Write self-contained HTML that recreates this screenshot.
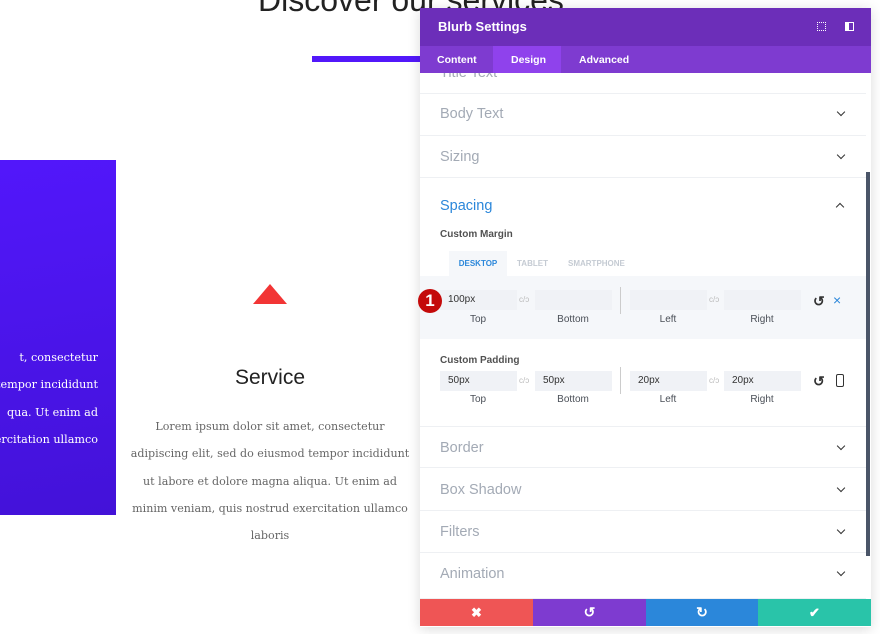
<!DOCTYPE html>
<html><head><style>
*{margin:0;padding:0;box-sizing:border-box}
body{width:880px;height:634px;overflow:hidden;background:#fff;position:relative;font-family:"Liberation Sans",sans-serif}
.abs{position:absolute}
.serif{font-family:"DejaVu Serif","Liberation Serif",serif}
.row{position:absolute;left:420px;width:446px;border-bottom:1px solid #eef0f3;font-size:14.5px;color:#a3aab5}
.row span{position:absolute;left:20px}
.chev{position:absolute;right:22px;width:6px;height:6px;border-right:1.8px solid #333;border-bottom:1.8px solid #333;transform:rotate(45deg)}
.inp{position:absolute;height:20px;background:#f0f2f6;font-size:10px;color:#333;padding-left:8px;line-height:20px}
.lab{position:absolute;font-size:10px;color:#4a4f57;text-align:center;width:76px}
.lnk{position:absolute;font-size:8px;color:#bbb}
</style></head><body>
<div class="abs" style="left:258px;top:-18px;font-size:32px;color:#222">Discover our services</div>
<div class="abs" style="left:312px;top:56px;width:110px;height:6px;background:#5218fa"></div>
<div class="abs" style="left:0;top:160px;width:116px;height:355px;background:linear-gradient(170deg,#5217fb,#4312d8)"></div>
<div class="abs serif" style="left:-150px;top:344px;width:248px;text-align:right;color:#fff;font-size:11.2px;line-height:27.3px;white-space:nowrap">t, consectetur<br>tempor incididunt<br>qua. Ut enim ad<br>ercitation ullamco</div>
<div class="abs" style="left:253px;top:284px;width:0;height:0;border-left:17px solid transparent;border-right:17px solid transparent;border-bottom:20px solid #f23535"></div>
<div class="abs" style="left:170px;top:366px;width:200px;text-align:center;font-size:21px;color:#222">Service</div>
<div class="abs serif" style="left:110px;top:413px;width:320px;text-align:center;color:#666;font-size:11.1px;line-height:27.3px;white-space:nowrap">Lorem ipsum dolor sit amet, consectetur<br>adipiscing elit, sed do eiusmod tempor incididunt<br>ut labore et dolore magna aliqua. Ut enim ad<br>minim veniam, quis nostrud exercitation ullamco<br>laboris</div>

<div class="abs" style="left:420px;top:8px;width:451px;height:619px;background:#fff;box-shadow:0 2px 12px rgba(0,0,0,.15)"></div>
<div class="row" style="top:73px;height:21px;"><span style="top:-8px">Title Text</span></div>
<div class="row" style="top:94px;height:42px"><span style="top:12px">Body Text</span><div class="chev" style="top:15px"></div></div>
<div class="row" style="top:136px;height:42px"><span style="top:13px">Sizing</span><div class="chev" style="top:16px"></div></div>
<div class="abs" style="left:440px;top:198px;font-size:14.5px;color:#2b87da">Spacing</div>
<div class="abs" style="left:837px;top:204px;width:6px;height:6px;border-left:1.8px solid #333;border-top:1.8px solid #333;transform:rotate(45deg)"></div>
<div class="abs" style="left:440px;top:229px;font-size:10px;color:#333;font-weight:bold;opacity:.85">Custom Margin</div>
<div class="abs" style="left:449px;top:251px;width:58px;height:25px;background:#f5f7fa;font-size:8px;font-weight:bold;color:#2b87da;text-align:center;line-height:26px">DESKTOP</div>
<div class="abs" style="left:517px;top:259px;font-size:8px;font-weight:bold;color:#c5cbd3">TABLET</div>
<div class="abs" style="left:568px;top:259px;font-size:8px;font-weight:bold;color:#c5cbd3">SMARTPHONE</div>
<div class="abs" style="left:420px;top:276px;width:446px;height:63px;background:#f5f7fa"></div>
<div class="inp" style="left:440px;top:290px;width:77px">100px</div>
<div class="inp" style="left:535px;top:290px;width:77px"></div>
<div class="inp" style="left:630px;top:290px;width:77px"></div>
<div class="inp" style="left:724px;top:290px;width:77px"></div>
<div class="abs" style="left:620px;top:287px;width:1px;height:27px;background:#ccc"></div>
<div class="lnk" style="left:519px;top:295px">c/ɔ</div><div class="lnk" style="left:709px;top:295px">c/ɔ</div>
<div class="abs" style="left:418px;top:289px;width:24px;height:24px;border-radius:50%;background:#c40a0a;color:#fff;font-size:17px;text-align:center;line-height:24px;font-weight:bold">1</div>
<div class="lab" style="left:440px;top:314px">Top</div><div class="lab" style="left:535px;top:314px">Bottom</div><div class="lab" style="left:630px;top:314px">Left</div><div class="lab" style="left:724px;top:314px">Right</div>
<div class="abs" style="left:813px;top:293px;font-size:14px;font-weight:bold;color:#333">↺</div>
<div class="abs" style="left:833px;top:292px;font-size:14px;color:#2b87da">×</div>
<div class="abs" style="left:440px;top:355px;font-size:10px;color:#333;font-weight:bold;opacity:.85">Custom Padding</div>
<div class="inp" style="left:440px;top:371px;width:77px">50px</div>
<div class="inp" style="left:535px;top:371px;width:77px">50px</div>
<div class="inp" style="left:630px;top:371px;width:77px">20px</div>
<div class="inp" style="left:724px;top:371px;width:77px">20px</div>
<div class="abs" style="left:620px;top:367px;width:1px;height:27px;background:#ccc"></div>
<div class="lnk" style="left:519px;top:376px">c/ɔ</div><div class="lnk" style="left:709px;top:376px">c/ɔ</div>
<div class="lab" style="left:440px;top:394px">Top</div><div class="lab" style="left:535px;top:394px">Bottom</div><div class="lab" style="left:630px;top:394px">Left</div><div class="lab" style="left:724px;top:394px">Right</div>
<div class="abs" style="left:813px;top:373px;font-size:14px;font-weight:bold;color:#333">↺</div>
<div class="abs" style="left:836px;top:374px;width:8px;height:13px;border:1.5px solid #333;border-radius:2px"></div>
<div class="row" style="top:426px;height:42px;border-top:1px solid #eef0f3"><span style="top:13px">Border</span><div class="chev" style="top:16px"></div></div>
<div class="row" style="top:468px;height:43px"><span style="top:14px">Box Shadow</span><div class="chev" style="top:17px"></div></div>
<div class="row" style="top:511px;height:42px"><span style="top:13px">Filters</span><div class="chev" style="top:16px"></div></div>
<div class="row" style="top:553px;height:46px"><span style="top:13px">Animation</span><div class="chev" style="top:16px"></div></div>
<div class="abs" style="left:866px;top:172px;width:4px;height:384px;background:#4a5568"></div>

<div class="abs" style="left:420px;top:8px;width:451px;height:38px;background:#6c2eb9"></div>
<div class="abs" style="left:438px;top:19px;font-size:13px;font-weight:bold;color:#fff">Blurb Settings</div>
<div class="abs" style="left:817px;top:22px;width:9px;height:9px;border:1.5px dotted #fff"></div>
<div class="abs" style="left:845px;top:22px;width:9px;height:9px;border:1.5px solid #fff;border-left-width:4px"></div>
<div class="abs" style="left:420px;top:46px;width:451px;height:27px;background:#7e3bd0"></div>
<div class="abs" style="left:493px;top:46px;width:68px;height:27px;background:#8f42ec"></div>
<div class="abs" style="left:437px;top:54px;font-size:10.5px;font-weight:bold;color:#fff">Content</div>
<div class="abs" style="left:511px;top:54px;font-size:10.5px;font-weight:bold;color:#fff">Design</div>
<div class="abs" style="left:579px;top:54px;font-size:10.5px;font-weight:bold;color:#fff">Advanced</div>

<div class="abs" style="left:420px;top:599px;width:113px;height:27px;background:#ef5555;color:#fff;text-align:center;line-height:27px;font-size:13px;font-weight:bold">✖</div>
<div class="abs" style="left:533px;top:599px;width:113px;height:27px;background:#7e3bd0;color:#fff;text-align:center;line-height:27px;font-size:14px;font-weight:bold">↺</div>
<div class="abs" style="left:646px;top:599px;width:112px;height:27px;background:#2b87da;color:#fff;text-align:center;line-height:27px;font-size:14px;font-weight:bold">↻</div>
<div class="abs" style="left:758px;top:599px;width:113px;height:27px;background:#29c4a9;color:#fff;text-align:center;line-height:27px;font-size:13px;font-weight:bold">✔</div>
</body></html>
